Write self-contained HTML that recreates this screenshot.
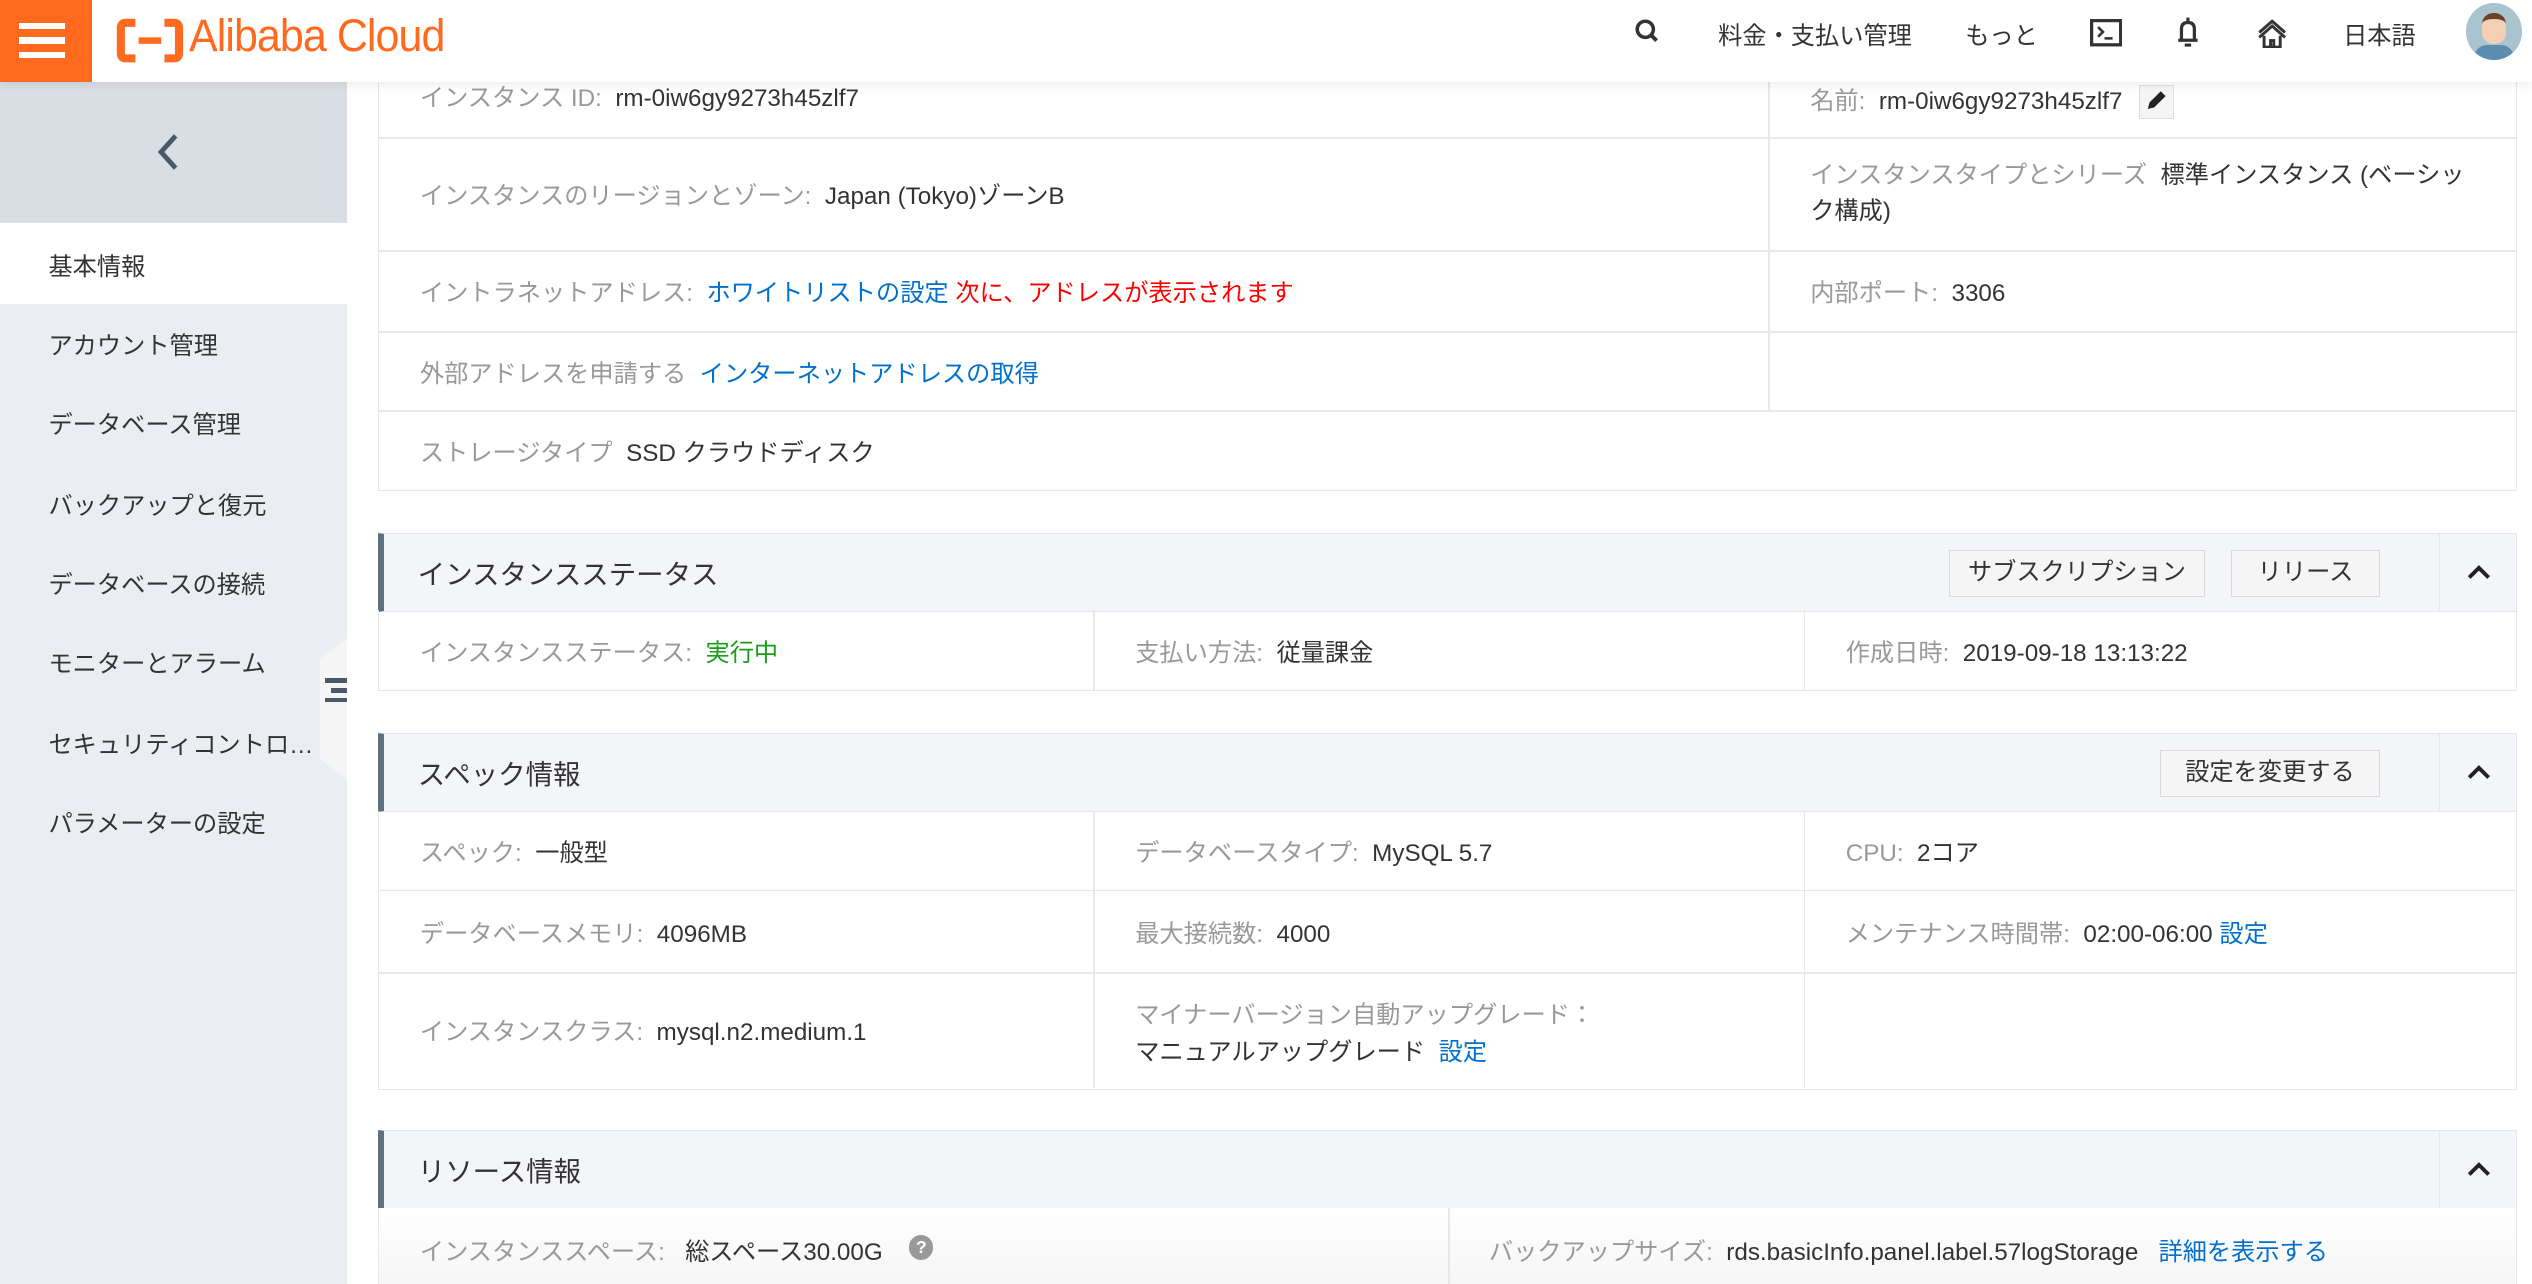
<!DOCTYPE html>
<html><head><meta charset="utf-8"><style>
*{margin:0;padding:0;box-sizing:border-box}
html,body{width:2532px;height:1284px;overflow:hidden;background:#fff}
#w{zoom:1.6148;width:1568px;height:795px;position:relative;font-family:"Liberation Sans","Noto Sans CJK JP",sans-serif;font-size:15px;color:#333}
.a{position:absolute}
.hdr{left:0;top:0;width:1568px;height:51px;background:#fff;box-shadow:0 2px 6px rgba(0,0,0,.08);z-index:5}
.nav{top:10px;font-size:15px;color:#333}
.side{left:0;top:51px;width:215px;height:744px;background:#eaedf1}
.si{position:absolute;left:30px;font-size:15px;color:#333}
.lbl{color:#999}
.hl{position:absolute;height:1px;background:#e6e8eb}
.vl{position:absolute;width:1px;background:#e6e8eb}
.t{position:absolute;white-space:nowrap}
.sh{position:absolute;left:234px;width:1325px;height:49px;background:#f3f5f8;border:1px solid #e3e6ea;border-left:4px solid #637081}
.sh .ti{position:absolute;left:21px;top:11px;font-size:17px;color:#333}
.btn{position:absolute;top:10px;height:29px;border:1px solid #d9d9d9;background:#f5f5f5;font-size:15px;color:#333;text-align:center;line-height:27px}
.chev{position:absolute;right:0;top:0;width:48px;height:47px;border-left:1px solid #e3e6ea}
.blue{color:#0070cc}
</style></head><body><div id="w">
<div class="a hdr">
 <div class="a" style="left:0;top:0;width:57px;height:51px;background:#ff6a1f">
  <div class="a" style="left:12px;top:14px;width:28px;height:4px;background:#fff"></div>
  <div class="a" style="left:12px;top:23px;width:28px;height:4px;background:#fff"></div>
  <div class="a" style="left:12px;top:32px;width:28px;height:4px;background:#fff"></div>
 </div>
 <svg class="a" style="left:72px;top:11px" width="42" height="28" viewBox="0 0 42 28"><path d="M12 3H6Q3 3 3 6V22Q3 25 6 25H12M30 3H36Q39 3 39 6V22Q39 25 36 25H30" fill="none" stroke="#ff6a1f" stroke-width="5"/><rect x="14" y="12" width="14" height="4" fill="#ff6a1f"/></svg>
 <div class="t" style="left:117px;top:6px;font-size:28px;color:#ff6a1f;letter-spacing:-0.6px;transform:scaleX(.95);transform-origin:left">Alibaba Cloud</div>
 <svg class="a" style="left:1012px;top:11px" width="16" height="16" viewBox="0 0 16 16"><circle cx="7" cy="7" r="5" fill="none" stroke="#333" stroke-width="2.2"/><path d="M10.5 10.5L14 14" stroke="#333" stroke-width="2.4"/></svg>
 <div class="t nav" style="left:1064px">料金・支払い管理</div>
 <div class="t nav" style="left:1217px">もっと</div>
 <svg class="a" style="left:1294px;top:12px" width="20" height="17" viewBox="0 0 20 17"><rect x="1" y="1" width="18" height="15" fill="none" stroke="#333" stroke-width="2"/><path d="M5 5l3 3-3 3M9 12h5" fill="none" stroke="#333" stroke-width="1.6"/></svg>
 <svg class="a" style="left:1347px;top:10px" width="16" height="20" viewBox="0 0 16 20"><path d="M8 1v2M4 15V8Q4 4 8 4Q12 4 12 8V15M2 15H14M6 18H10" fill="none" stroke="#333" stroke-width="2"/></svg>
 <svg class="a" style="left:1397px;top:11px" width="20" height="19" viewBox="0 0 20 19"><path d="M2 9L10 2L18 9M2 12L10 5L18 12M5 11V18H15V11M9 18V14H11V18" fill="none" stroke="#333" stroke-width="1.8"/></svg>
 <div class="t nav" style="left:1451px">日本語</div>
 <div class="a" style="left:1527px;top:2px;width:35px;height:35px;border-radius:50%;background:#a9c3cf;overflow:hidden">
  <div class="a" style="left:10px;top:6px;width:15px;height:19px;border-radius:7px;background:#f3cfb5;border-top:4px solid #6b3f2a"></div>
  <div class="a" style="left:5px;top:26px;width:25px;height:12px;border-radius:8px 8px 0 0;background:#5b8db0"></div>
 </div>
</div>
<div class="a side">
 <div class="a" style="left:0;top:0;width:215px;height:87px;background:#d9dee5"></div>
 <svg class="a" style="left:95px;top:30px" width="18" height="26" viewBox="0 0 18 26"><path d="M14 3L5 13L14 23" fill="none" stroke="#4a5868" stroke-width="3"/></svg>
 <div class="a" style="left:0;top:87px;width:215px;height:50px;background:#fff"></div>
 <div class="si" style="top:102px">基本情報</div>
 <div class="si" style="top:151px">アカウント管理</div>
 <div class="si" style="top:200px">データベース管理</div>
 <div class="si" style="top:250px">バックアップと復元</div>
 <div class="si" style="top:299px">データベースの接続</div>
 <div class="si" style="top:348px">モニターとアラーム</div>
 <div class="si" style="top:398px">セキュリティコントロ…</div>
 <div class="si" style="top:447px">パラメーターの設定</div>
 <div class="a" style="left:198px;top:344px;width:17px;height:88px;background:#f5f5f5;clip-path:polygon(100% 0,100% 100%,0 85%,0 15%)"></div>
 <div class="a" style="left:201px;top:369px;width:14px;height:3px;background:#4a5868"></div>
 <div class="a" style="left:205px;top:375px;width:10px;height:3px;background:#4a5868"></div>
 <div class="a" style="left:201px;top:381px;width:14px;height:3px;background:#4a5868"></div>
</div>
<div class="a" style="left:234px;top:51px;width:1325px;height:253px;border:1px solid #e6e8eb;border-top:none"></div>
<div class="hl" style="left:234px;width:1325px;top:85px"></div>
<div class="hl" style="left:234px;width:1325px;top:155px"></div>
<div class="hl" style="left:234px;width:1325px;top:205px"></div>
<div class="hl" style="left:234px;width:1325px;top:254px"></div>
<div class="vl" style="left:1095px;top:51px;height:203px"></div>
<div class="t" style="left:260px;top:48px"><span class="lbl">インスタンス ID:</span>&nbsp; rm-0iw6gy9273h45zlf7</div>
<div class="t" style="left:1121px;top:50px"><span class="lbl">名前:</span>&nbsp; rm-0iw6gy9273h45zlf7 <span style="display:inline-block;vertical-align:middle;width:22px;height:21px;border:1px solid #ddd;background:#f5f5f5;position:relative;margin-left:6px"><svg style="position:absolute;left:2px;top:1px" width="16" height="16" viewBox="0 0 16 16"><path d="M3 13L4 9L11 2L14 5L7 12Z" fill="#222"/></svg></span></div>
<div class="t" style="left:260px;top:109px"><span class="lbl">インスタンスのリージョンとゾーン:</span>&nbsp; Japan (Tokyo)ゾーンB</div>
<div class="t" style="left:1121px;top:98px;line-height:22px;white-space:normal;width:410px"><span class="lbl">インスタンスタイプとシリーズ</span>&nbsp; 標準インスタンス (ベーシック構成)</div>
<div class="t" style="left:260px;top:169px"><span class="lbl">イントラネットアドレス:</span>&nbsp; <span class="blue">ホワイトリストの設定</span> <span style="color:#f00">次に、アドレスが表示されます</span></div>
<div class="t" style="left:1121px;top:169px"><span class="lbl">内部ポート:</span>&nbsp; 3306</div>
<div class="t" style="left:260px;top:219px"><span class="lbl">外部アドレスを申請する</span>&nbsp; <span class="blue">インターネットアドレスの取得</span></div>
<div class="t" style="left:260px;top:268px"><span class="lbl">ストレージタイプ</span>&nbsp; SSD クラウドディスク</div>
<div class="sh" style="top:330px"><div class="ti">インスタンスステータス</div>
 <div class="btn" style="left:969px;width:159px">サブスクリプション</div>
 <div class="btn" style="left:1144px;width:92px">リリース</div>
 <div class="chev"><svg class="a" style="left:16px;top:18px" width="16" height="11" viewBox="0 0 16 11"><path d="M2 9L8 3L14 9" fill="none" stroke="#222" stroke-width="2.4"/></svg></div></div>
<div class="a" style="left:234px;top:378px;width:1325px;height:50px;border:1px solid #e6e8eb;border-top:none"></div>
<div class="vl" style="left:677px;top:378px;height:49px"></div>
<div class="vl" style="left:1117px;top:378px;height:49px"></div>
<div class="t" style="left:260px;top:392px"><span class="lbl">インスタンスステータス:</span>&nbsp; <span style="color:#1a9c1a">実行中</span></div>
<div class="t" style="left:703px;top:392px"><span class="lbl">支払い方法:</span>&nbsp; 従量課金</div>
<div class="t" style="left:1143px;top:392px"><span class="lbl">作成日時:</span>&nbsp; 2019-09-18 13:13:22</div>
<div class="sh" style="top:454px"><div class="ti">スペック情報</div>
 <div class="btn" style="left:1100px;width:136px">設定を変更する</div>
 <div class="chev"><svg class="a" style="left:16px;top:18px" width="16" height="11" viewBox="0 0 16 11"><path d="M2 9L8 3L14 9" fill="none" stroke="#222" stroke-width="2.4"/></svg></div></div>
<div class="a" style="left:234px;top:502px;width:1325px;height:173px;border:1px solid #e6e8eb;border-top:none"></div>
<div class="hl" style="left:234px;width:1325px;top:551px"></div>
<div class="hl" style="left:234px;width:1325px;top:602px"></div>
<div class="vl" style="left:677px;top:502px;height:172px"></div>
<div class="vl" style="left:1117px;top:502px;height:172px"></div>
<div class="t" style="left:260px;top:516px"><span class="lbl">スペック:</span>&nbsp; 一般型</div>
<div class="t" style="left:703px;top:516px"><span class="lbl">データベースタイプ:</span>&nbsp; MySQL 5.7</div>
<div class="t" style="left:1143px;top:516px"><span class="lbl">CPU:</span>&nbsp; 2コア</div>
<div class="t" style="left:260px;top:566px"><span class="lbl">データベースメモリ:</span>&nbsp; 4096MB</div>
<div class="t" style="left:703px;top:566px"><span class="lbl">最大接続数:</span>&nbsp; 4000</div>
<div class="t" style="left:1143px;top:566px"><span class="lbl">メンテナンス時間帯:</span>&nbsp; 02:00-06:00 <span class="blue">設定</span></div>
<div class="t" style="left:260px;top:627px"><span class="lbl">インスタンスクラス:</span>&nbsp; mysql.n2.medium.1</div>
<div class="t" style="left:703px;top:616px"><span class="lbl">マイナーバージョン自動アップグレード：</span></div>
<div class="t" style="left:703px;top:639px">マニュアルアップグレード &nbsp;<span class="blue">設定</span></div>
<div class="sh" style="top:700px"><div class="ti">リソース情報</div>
 <div class="chev"><svg class="a" style="left:16px;top:18px" width="16" height="11" viewBox="0 0 16 11"><path d="M2 9L8 3L14 9" fill="none" stroke="#222" stroke-width="2.4"/></svg></div></div>
<div class="a" style="left:234px;top:748px;width:1325px;height:60px;border:1px solid #e6e8eb;border-top:none;background:linear-gradient(#fff,#f3f3f3)"></div>
<div class="vl" style="left:897px;top:748px;height:47px"></div>
<div class="t" style="left:260px;top:763px"><span class="lbl">インスタンススペース:</span>&nbsp;&nbsp; 総スペース30.00G</div>
<div class="a" style="left:563px;top:765px;width:15px;height:15px;border-radius:50%;background:#999;color:#fff;font-size:11px;text-align:center;line-height:15px;font-weight:bold">?</div>
<div class="t" style="left:922px;top:763px"><span class="lbl">バックアップサイズ:</span>&nbsp; rds.basicInfo.panel.label.57logStorage &nbsp;&nbsp;<span class="blue">詳細を表示する</span></div>
</div></body></html>
